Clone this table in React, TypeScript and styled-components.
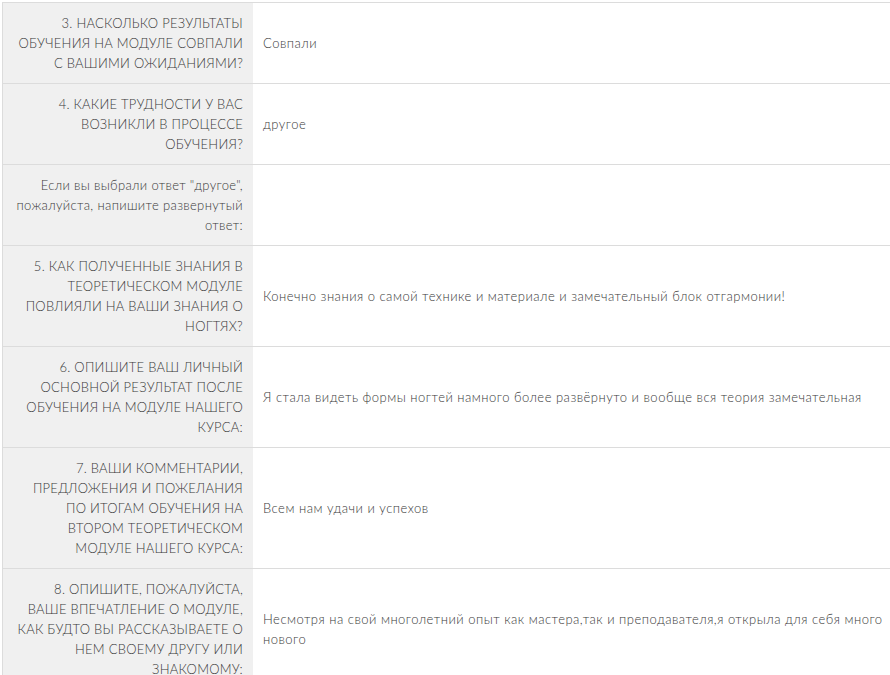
import React from "react";
import styled, { createGlobalStyle } from "styled-components";

const GlobalStyle = createGlobalStyle`
    html, body {
        margin: 0;
        padding: 0;
        background: #fff;
    }
    body {
        font-family: Lato, "Open Sans", "Liberation Sans", sans-serif;
    }
`

type Row = {
    question: React.ReactNode;
    answer: React.ReactNode;
    plain?: boolean;
}

const rows: Row[] = [
    {
        question: <>3. НАСКОЛЬКО РЕЗУЛЬТАТЫ<br/>ОБУЧЕНИЯ НА МОДУЛЕ СОВПАЛИ<br/>С ВАШИМИ ОЖИДАНИЯМИ?</>,
        answer: "Совпали",
    },
    {
        question: <>4. КАКИЕ ТРУДНОСТИ У ВАС<br/>ВОЗНИКЛИ В ПРОЦЕССЕ<br/>ОБУЧЕНИЯ?</>,
        answer: "другое",
    },
    {
        question: <>Если вы выбрали ответ "другое",<br/>пожалуйста, напишите развернутый<br/>ответ:</>,
        answer: "",
        plain: true,
    },
    {
        question: <>5. КАК ПОЛУЧЕННЫЕ ЗНАНИЯ В<br/>ТЕОРЕТИЧЕСКОМ МОДУЛЕ<br/>ПОВЛИЯЛИ НА ВАШИ ЗНАНИЯ О<br/>НОГТЯХ?</>,
        answer: "Конечно знания о самой технике и материале и замечательный блок отгармонии!",
    },
    {
        question: <>6. ОПИШИТЕ ВАШ ЛИЧНЫЙ<br/>ОСНОВНОЙ РЕЗУЛЬТАТ ПОСЛЕ<br/>ОБУЧЕНИЯ НА МОДУЛЕ НАШЕГО<br/>КУРСА:</>,
        answer: "Я стала видеть формы ногтей намного более развёрнуто и вообще вся теория замечательная",
    },
    {
        question: <>7. ВАШИ КОММЕНТАРИИ,<br/>ПРЕДЛОЖЕНИЯ И ПОЖЕЛАНИЯ<br/>ПО ИТОГАМ ОБУЧЕНИЯ НА<br/>ВТОРОМ ТЕОРЕТИЧЕСКОМ<br/>МОДУЛЕ НАШЕГО КУРСА:</>,
        answer: "Всем нам удачи и успехов",
    },
    {
        question: <>8. ОПИШИТЕ, ПОЖАЛУЙСТА,<br/>ВАШЕ ВПЕЧАТЛЕНИЕ О МОДУЛЕ,<br/>КАК БУДТО ВЫ РАССКАЗЫВАЕТЕ О<br/>НЕМ СВОЕМУ ДРУГУ ИЛИ<br/>ЗНАКОМОМУ:</>,
        answer: <>Несмотря на свой многолетний опыт как мастера,так и преподавателя,я открыла для себя много<br/>нового</>,
    },
]

export default function App() {
    return (
        <Page>
            <GlobalStyle/>
            <Table>
                {rows.map((row, i) => (
                    <TableRow key={i}>
                        <Question $plain={row.plain}>{row.question}</Question>
                        <Answer>{row.answer}</Answer>
                    </TableRow>
                ))}
            </Table>
        </Page>
    )
}

const Page = styled.div`
    padding: 2px 0 0 2px;
    width: 890px;
    height: 675px;
    box-sizing: border-box;
    overflow: hidden;
`

const Table = styled.div`
    width: 888px;
    border-left: 1px solid #dcdcdc;
    border-top: 1px solid #dcdcdc;
`

const TableRow = styled.div`
    display: grid;
    grid-template-columns: 250px 1fr;
    border-bottom: 1px solid #dcdcdc;
`

const Question = styled.div<{ $plain?: boolean }>`
    padding: 10px 10px;
    background-color: #f0f0f0;
    text-align: right;
    font-size: 13px;
    font-weight: 300;
    line-height: 20px;
    color: #3a3a3a;
    white-space: nowrap;
    letter-spacing: ${p => p.$plain ? "0.35px" : "0.25px"};
`

const Answer = styled.div`
    padding: 10px 10px;
    display: flex;
    align-items: center;
    font-size: 13px;
    font-weight: 300;
    line-height: 20px;
    color: #3a3a3a;
    letter-spacing: 0.5px;
    white-space: nowrap;
`
